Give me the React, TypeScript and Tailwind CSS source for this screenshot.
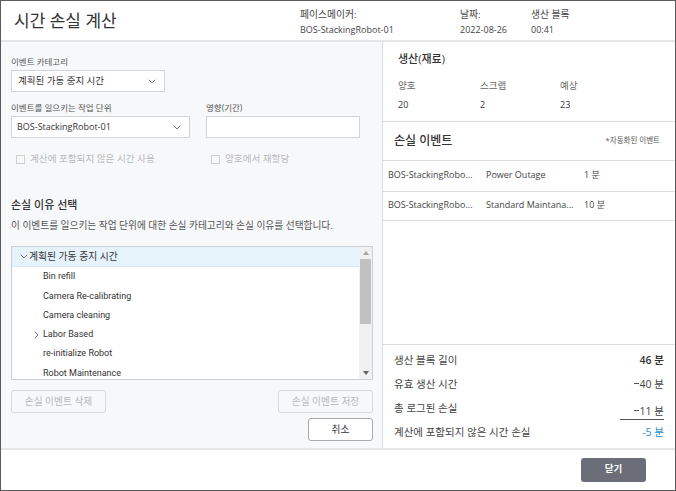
import React from 'react';

const TREE_ITEMS = [
    { label: 'Bin refill' },
    { label: 'Camera Re-calibrating' },
    { label: 'Camera cleaning' },
    { label: 'Labor Based', collapsed: true },
    { label: 're-initialize Robot' },
    { label: 'Robot Maintenance' },
];

const LOSS_EVENTS = [
    { unit: 'BOS-StackingRobo...', reason: 'Power Outage', minutes: '1 분', h: 'h-[31px]' },
    { unit: 'BOS-StackingRobo...', reason: 'Standard Maintana...', minutes: '10 분', h: 'h-[29px]' },
];

function Chevron({ className = '' }: { className?: string }) {
    return (
        <svg className={className} width="8" height="5" viewBox="0 0 8 5" fill="none">
            <path d="M1 1l3 3 3-3" stroke="#777" strokeWidth="1" strokeLinecap="round" strokeLinejoin="round" />
        </svg>
    );
}

function Checkbox({ label }: { label: string }) {
    return (
        <div className="flex items-center gap-[5px] text-[9.6px] text-[#b9b9b9]">
            <span className="w-[9px] h-[9px] border border-[#cfcfcf] bg-[#f9f9f9]" />
            <span>{label}</span>
        </div>
    );
}

// raised minus used in the summary figures
function Minus() {
    return <span className="inline-block w-[5px] h-[1px] bg-[#555] mr-[1px] -translate-y-[4px]" />;
}

export default function App() {
    return (
        <div className="w-[676px] h-[491px] border border-[#5a5a5a] bg-white flex flex-col font-['Open_Sans','Noto_Sans_CJK_KR',sans-serif] text-[#333]">
            {/* Header */}
            <div className="h-[41px] shrink-0 flex border-b-2 border-[#e4e5e7]">
                <div className="w-[299px] pl-[13px] flex items-center text-[17px] text-[#333]">
                    시간 손실 계산
                </div>
                <div className="w-[160px] pt-[6px] text-[9px] leading-[15px] text-[#444]">
                    <p className="text-[9.8px]">페이스메이커:</p>
                    <p>BOS-StackingRobot-01</p>
                </div>
                <div className="w-[71px] pt-[6px] text-[9px] leading-[15px] text-[#444]">
                    <p className="text-[9.8px]">날짜:</p>
                    <p>2022-08-26</p>
                </div>
                <div className="pt-[6px] text-[9px] leading-[15px] text-[#444]">
                    <p className="text-[9.8px]">생산 블록</p>
                    <p>00:41</p>
                </div>
            </div>

            {/* Body */}
            <div className="h-[408px] shrink-0 flex border-b-2 border-[#e4e5e7]">
                {/* Left panel */}
                <div className="w-[381px] shrink-0 bg-[#f7f8fa] pl-[10px] pr-[9px] pt-[15px] flex flex-col">
                    <p className="text-[8.5px] leading-[10px] text-[#555]">이벤트 카테고리</p>
                    <div className="shrink-0 mt-[3px] w-[154px] h-[22px] bg-white border border-[#d4d4d4] flex items-center justify-between pl-[6px] pr-[8px] text-[9.5px] text-[#333]">
                        <span>계획된 가동 중지 시간</span>
                        <Chevron />
                    </div>

                    <div className="shrink-0 mt-[11px] flex gap-[16px]">
                        <div>
                            <p className="text-[8.5px] leading-[10px] text-[#555]">이벤트를 일으키는 작업 단위</p>
                            <div className="mt-[3px] w-[179px] h-[22px] bg-white border border-[#d4d4d4] flex items-center justify-between pl-[5px] pr-[8px] text-[9px] text-[#333]">
                                <span>BOS-StackingRobot-01</span>
                                <Chevron />
                            </div>
                        </div>
                        <div>
                            <p className="text-[8.5px] leading-[10px] text-[#555]">영향(기간)</p>
                            <div className="mt-[3px] w-[154px] h-[22px] bg-white border border-[#d4d4d4]" />
                        </div>
                    </div>

                    <div className="shrink-0 mt-[14px] flex pl-[5px]">
                        <div className="w-[195px]">
                            <Checkbox label="계산에 포함되지 않은 시간 사용" />
                        </div>
                        <Checkbox label="양호에서 재할당" />
                    </div>

                    <p className="shrink-0 mt-[32px] text-[11px] leading-[14px] font-medium text-[#333]">손실 이유 선택</p>
                    <p className="shrink-0 mt-[8px] text-[9.7px] leading-[12px] text-[#555]">
                        이 이벤트를 일으키는 작업 단위에 대한 손실 카테고리와 손실 이유를 선택합니다.
                    </p>

                    {/* Tree */}
                    <div className="shrink-0 mt-[14px] w-[362px] h-[134px] bg-white border border-[#cfcfcf] flex font-['Roboto','Noto_Sans_CJK_KR',sans-serif] text-[9px] text-[#333]">
                        <div className="flex-1 flex flex-col">
                            <div className="h-[20px] shrink-0 bg-[#e6f3fb] border-b border-[#d8ecf7] flex items-center pl-[8px] gap-[1px]">
                                <Chevron />
                                <span className="text-[9.8px] font-['Open_Sans','Noto_Sans_CJK_KR',sans-serif]">계획된 가동 중지 시간</span>
                            </div>
                            {TREE_ITEMS.map((item) => (
                                <div key={item.label} className="h-[19.3px] shrink-0 flex items-center pl-[22px]">
                                    <span className="w-[8px] flex items-center">
                                        {item.collapsed && (
                                            <svg width="5" height="8" viewBox="0 0 5 8" fill="none">
                                                <path d="M1 1l3 3-3 3" stroke="#777" strokeWidth="1" strokeLinecap="round" strokeLinejoin="round" />
                                            </svg>
                                        )}
                                    </span>
                                    <span className="ml-[1px]">{item.label}</span>
                                </div>
                            ))}
                        </div>
                        {/* Scrollbar */}
                        <div className="w-[13px] bg-[#f1f1f1] flex flex-col items-center">
                            <div className="h-[12px] flex items-center justify-center">
                                <svg width="6" height="4" viewBox="0 0 6 4"><path d="M0 4L3 0L6 4z" fill="#a3a3a3" /></svg>
                            </div>
                            <div className="w-[11px] h-[65px] bg-[#c1c1c1]" />
                            <div className="flex-1" />
                            <div className="h-[12px] flex items-center justify-center">
                                <svg width="6" height="4" viewBox="0 0 6 4"><path d="M0 0L3 4L6 0z" fill="#606060" /></svg>
                            </div>
                        </div>
                    </div>

                    {/* Buttons */}
                    <div className="shrink-0 mt-[10px] w-[362px] flex justify-between">
                        <button className="w-[95px] h-[23px] rounded-[3px] border border-[#d9d9d9] bg-[#f7f8fa] text-[9.7px] text-[#b8b8b8]">
                            손실 이벤트 삭제
                        </button>
                        <button className="w-[95px] h-[23px] rounded-[3px] border border-[#d9d9d9] bg-[#f7f8fa] text-[9.7px] text-[#b8b8b8]">
                            손실 이벤트 저장
                        </button>
                    </div>
                    <div className="shrink-0 mt-[5px] w-[362px] flex justify-end">
                        <button className="w-[65px] h-[23px] rounded-[3px] border border-[#a9a9a9] bg-white text-[9.7px] text-[#333]">
                            취소
                        </button>
                    </div>
                </div>

                {/* Right panel */}
                <div className="flex-1 border-l border-[#dcdcdc] flex flex-col">
                    <div className="h-[80px] shrink-0 border-b border-[#dcdcdc] pl-[15px] pt-[10px]">
                        <p className="text-[11px] leading-[14px] font-medium text-[#333]">생산(재료)</p>
                        <div className="mt-[14px] flex text-[9.5px] leading-[12px]">
                            <div className="w-[82px]">
                                <p className="text-[#666]">양호</p>
                                <p className="mt-[7px] text-[9px] text-[#333]">20</p>
                            </div>
                            <div className="w-[80px]">
                                <p className="text-[#666]">스크랩</p>
                                <p className="mt-[7px] text-[9px] text-[#333]">2</p>
                            </div>
                            <div>
                                <p className="text-[#666]">예상</p>
                                <p className="mt-[7px] text-[9px] text-[#333]">23</p>
                            </div>
                        </div>
                    </div>

                    <div className="h-[39px] shrink-0 border-b border-[#dcdcdc] flex items-center justify-between pl-[11px] pr-[15px]">
                        <p className="text-[12px] font-medium text-[#333]">손실 이벤트</p>
                        <p className="text-[7.5px] text-[#555]">*자동화된 이벤트</p>
                    </div>

                    {LOSS_EVENTS.map((ev) => (
                        <div key={ev.reason} className={`${ev.h} shrink-0 border-b border-[#dcdcdc] flex items-center pl-[5px] pb-[3px] text-[9px] text-[#444]`}>
                            <span className="w-[98px]">{ev.unit}</span>
                            <span className="w-[98px]">{ev.reason}</span>
                            <span>{ev.minutes}</span>
                        </div>
                    ))}

                    <div className="flex-1 border-b border-[#dcdcdc]" />

                    {/* Summary */}
                    <div className="h-[103px] shrink-0 pl-[11px] pr-[11px] pt-[4px] text-[10.5px] text-[#444]">
                        <div className="h-[24px] flex items-center justify-between">
                            <span>생산 블록 길이</span>
                            <span className="font-semibold text-[#333]">46 분</span>
                        </div>
                        <div className="h-[24px] flex items-center justify-between">
                            <span>유효 생산 시간</span>
                            <span><Minus />40 분</span>
                        </div>
                        <div className="h-[24px] flex items-center justify-between">
                            <span>총 로그된 손실</span>
                            <span className="w-[44px] text-right border-b border-[#555] leading-[13px] mt-[6px] pb-[1px]"><Minus />11 분</span>
                        </div>
                        <div className="h-[24px] flex items-center justify-between">
                            <span>계산에 포함되지 않은 시간 손실</span>
                            <span className="text-[#1e90d2]">-5 분</span>
                        </div>
                    </div>
                </div>
            </div>

            {/* Footer */}
            <div className="flex-1 flex items-center justify-end pr-[29px] pb-[1px]">
                <button className="w-[65px] h-[24px] rounded-[3px] bg-[#6b6e79] text-white text-[9.5px] font-semibold">
                    닫기
                </button>
            </div>
        </div>
    );
}
